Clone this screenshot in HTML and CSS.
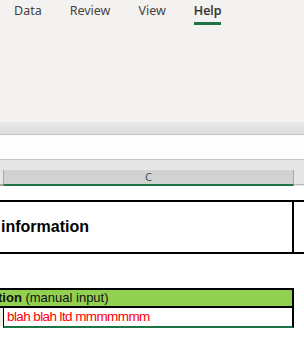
FILE: index.html
```html
<!DOCTYPE html>
<html>
<head>
    <title>Sheet</title>
    <link rel="stylesheet" href="styles.css">
</head>
<body>
    <!-- ribbon tabs -->
    <div class="ribbon">
        <div class="tabs">
            <span class="tab">Data</span>
            <span class="tab">Review</span>
            <span class="tab">View</span>
            <span class="tab active">Help</span>
        </div>
    </div>
    <div class="ribbon-foot"></div>
    <div class="formula-bar"></div>

    <!-- column header -->
    <div class="col-strip">
        <div class="corner"></div>
        <div class="col-head">C</div>
        <div class="col-rest"></div>
    </div>

    <div class="sheet">
        <div class="title-row">
            <div class="title-cell">information</div>
        </div>

        <div class="input-head"><b class="cut">tion</b> (manual input)</div>
        <div class="input-row">
            <div class="input-cell">blah blah ltd mmmmmmm</div>
        </div>
    </div>
</body>
</html>
```

FILE: styles.css
```css
* {
    box-sizing: border-box;
}
body {
    margin: 0;
    background: #fff;
    font-family: "Liberation Sans", Arial, sans-serif;
    overflow: hidden;
}
.ribbon {
    height: 122px;
    background: #f3f2f1;
}
.tabs {
    display: flex;
    gap: 28px;
    padding: 2px 0 0 14px;
}
.tab {
    font-family: "Noto Sans", sans-serif;
    font-size: 12.5px;
    line-height: 18px;
    color: #444;
}
.tab.active {
    font-weight: 500;
    color: #333;
    -webkit-text-stroke: 0.2px #333;
}
.tab.active::after {
    content: "";
    display: block;
    height: 3px;
    margin-top: 2px;
    background: #217346;
}
.ribbon-foot {
    height: 13px;
    background: linear-gradient(#e9e9e9, #dddddd);
    border-bottom: 1px solid #c6c6c6;
}
.formula-bar {
    height: 25px;
    background: #fdfdfd;
    border-bottom: 1px solid #c6c6c6;
}
.col-strip {
    display: flex;
    padding-top: 10px;
    background: #e6e6e6;
}
.corner {
    flex: none;
    width: 3px;
    height: 2px;
    align-self: flex-end;
    background: #a6a6a6;
}
.col-head {
    flex: none;
    width: 291px;
    height: 16px;
    background: #d2d2d2;
    border-left: 1px solid #a9a9a9;
    border-right: 1px solid #a9a9a9;
    border-bottom: 2px solid #217346;
    font-family: "Noto Sans", sans-serif;
    font-size: 11px;
    line-height: 14px;
    text-align: center;
    color: #3d5c5c;
}
.col-rest {
    flex: 1;
    height: 1px;
    align-self: flex-end;
    margin-bottom: 1px;
    background: #b5b5b5;
}
.sheet {
    padding-top: 14px;
}
.title-row {
    display: flex;
    height: 54px;
    border-top: 2px solid #000;
    border-bottom: 2px solid #000;
}
.title-cell {
    flex: none;
    width: 294px;
    display: flex;
    align-items: center;
    padding-left: 1px;
    border-right: 2px solid #000;
    font-size: 16px;
    font-weight: bold;
    color: #000;
}
.input-head {
    width: 294px;
    margin-top: 34px;
    height: 20px;
    line-height: 16px;
    background: #92d050;
    border-top: 2px solid #000;
    border-right: 2px solid #000;
    border-bottom: 2px solid #000;
    font-size: 13px;
    color: #111;
    white-space: nowrap;
    overflow: hidden;
}
.cut {
    margin-left: -2px;
}
.input-row {
    width: 294px;
    height: 20px;
    background: linear-gradient(to right, #f2efe4 3px, transparent 3px) no-repeat;
    background-size: 3px 18px;
}
.input-cell {
    width: 291px;
    height: 20px;
    margin-left: 3px;
    padding-left: 3px;
    border-left: 1px solid #000;
    border-right: 2px solid #000;
    border-bottom: 2px solid #217346;
    font-size: 13.5px;
    line-height: 18px;
    letter-spacing: -0.6px;
    color: #ff0000;
    white-space: nowrap;
    overflow: hidden;
}
```
